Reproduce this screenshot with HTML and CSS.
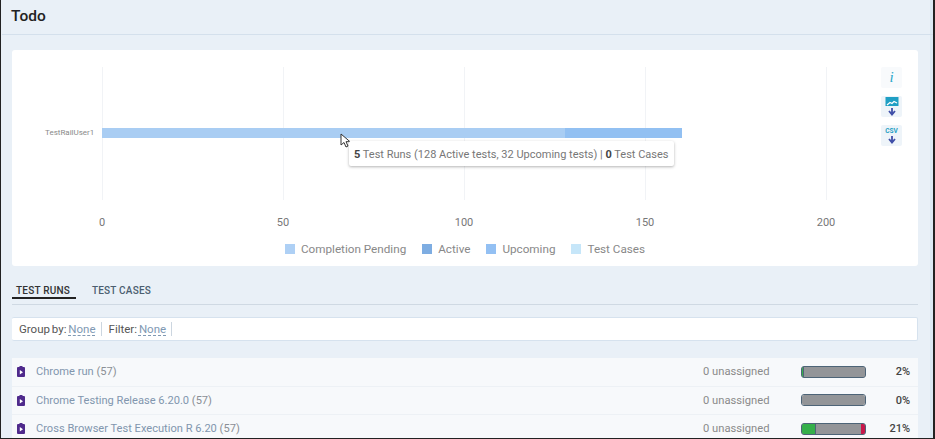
FILE: index.html
```html
<!DOCTYPE html>
<html lang="en">
<head>
  <meta charset="utf-8">
  <title>Todo</title>
  <link rel="stylesheet" href="styles.css">
</head>
<body>
  <div class="page">
    <header class="page-header"><h1>Todo</h1></header>

    <section class="chart-card">
      <div class="chart">
        <div class="chart-row">
          <div class="chart-user">TestRailUser1</div>
          <div class="plot">
            <div class="grid-cell"></div>
            <div class="grid-cell"></div>
            <div class="grid-cell"></div>
            <div class="grid-cell"></div>
            <div class="bar">
              <div class="bar-seg bar-pending" style="width: 463px"></div>
              <div class="bar-seg bar-upcoming" style="width: 117px"></div>
            </div>
            <svg class="cursor" width="11" height="15" viewBox="0 0 11 15">
              <path d="M1 1v11l3-2.500 2 4.500 2-1-2-4.300h4z" fill="#fff" stroke="#333" stroke-width="1"/>
            </svg>
            <div class="chart-tip"><b>5</b> Test Runs (128 Active tests, 32 Upcoming tests) | <b>0</b> Test Cases</div>
          </div>
        </div>
        <div class="axis">
          <span>0</span><span>50</span><span>100</span><span>150</span><span>200</span>
        </div>
        <div class="legend">
          <span class="legend-item"><i class="swatch swatch-pending"></i>Completion Pending</span>
          <span class="legend-item"><i class="swatch swatch-active"></i>Active</span>
          <span class="legend-item"><i class="swatch swatch-upcoming"></i>Upcoming</span>
          <span class="legend-item"><i class="swatch swatch-cases"></i>Test Cases</span>
        </div>
      </div>
      <div class="chart-tools">
        <div class="tool tool-info">i</div>
        <div class="tool">
          <svg width="16" height="19" viewBox="0 0 16 19">
            <rect x="1.500" y="0" width="13" height="9" fill="#1f9fc4"/>
            <path d="M3 8l3-2.500 2 1 2-2 3 1.500" fill="none" stroke="#fff" stroke-width="1.200"/>
            <path d="M8 11v5.500M5 14l3 3.500 3-3.500" fill="none" stroke="#3f4fa8" stroke-width="1.800"/>
          </svg>
        </div>
        <div class="tool">
          <div class="tool-csv">CSV</div>
          <svg width="16" height="9" viewBox="0 0 16 9">
            <path d="M8 1v5.500M5 4l3 3.500L11 4" fill="none" stroke="#3f4fa8" stroke-width="1.800"/>
          </svg>
        </div>
      </div>
    </section>

    <nav class="tabs">
      <a class="tab tab-active">TEST RUNS</a>
      <a class="tab">TEST CASES</a>
    </nav>

    <div class="filter-bar">
      <span class="filter-item">Group by: <u>None</u></span>
      <span class="filter-item">Filter: <u>None</u></span>
    </div>

    <div class="run-list">
      <div class="run-row">
        <svg class="run-icon" width="8" height="11" viewBox="0 0 8 11"><path d="M2.500 0h3v1H7a1 1 0 0 1 1 1v8a1 1 0 0 1-1 1H1a1 1 0 0 1-1-1V2a1 1 0 0 1 1-1h1.500z" fill="#4f2a8c"/><path d="M2.800 4v4.500L6 6.200z" fill="#fff"/></svg>
        <div class="run-name"><a>Chrome run</a> (57)</div>
        <div class="run-assigned">0 unassigned</div>
        <div class="progress">
          <div class="progress-pass" style="width: 3%"></div>
          <div class="progress-rest"></div>
        </div>
        <div class="run-pct">2%</div>
      </div>
      <div class="run-row">
        <svg class="run-icon" width="8" height="11" viewBox="0 0 8 11"><path d="M2.500 0h3v1H7a1 1 0 0 1 1 1v8a1 1 0 0 1-1 1H1a1 1 0 0 1-1-1V2a1 1 0 0 1 1-1h1.500z" fill="#4f2a8c"/><path d="M2.800 4v4.500L6 6.200z" fill="#fff"/></svg>
        <div class="run-name"><a>Chrome Testing Release 6.20.0</a> (57)</div>
        <div class="run-assigned">0 unassigned</div>
        <div class="progress">
          <div class="progress-rest"></div>
        </div>
        <div class="run-pct">0%</div>
      </div>
      <div class="run-row">
        <svg class="run-icon" width="8" height="11" viewBox="0 0 8 11"><path d="M2.500 0h3v1H7a1 1 0 0 1 1 1v8a1 1 0 0 1-1 1H1a1 1 0 0 1-1-1V2a1 1 0 0 1 1-1h1.500z" fill="#4f2a8c"/><path d="M2.800 4v4.500L6 6.200z" fill="#fff"/></svg>
        <div class="run-name"><a>Cross Browser Test Execution R 6.20</a> (57)</div>
        <div class="run-assigned">0 unassigned</div>
        <div class="progress">
          <div class="progress-pass" style="width: 23%"></div>
          <div class="progress-rest"></div>
          <div class="progress-fail" style="width: 7%"></div>
        </div>
        <div class="run-pct">21%</div>
      </div>
    </div>
  </div>
</body>
</html>
```

FILE: styles.css
```css
html, body {
  margin: 0;
  height: 439px;
  overflow: hidden;
}

body {
  font-family: Roboto, 'Liberation Sans', sans-serif;
  background: #fff;
  color: #555;
}

.page {
  box-sizing: border-box;
  width: 935px;
  height: 439px;
  padding-left: 1px;
  background: #e9f0f7;
  border-left: 1px solid #222;
  border-right: 2px solid #222;
  border-bottom: 1px solid #222;
  box-shadow: inset -3px 0 0 #dbe9f3;
  overflow: hidden;
}

.page-header {
  height: 34px;
  border-bottom: 1px solid #d4e0ec;
  box-sizing: content-box;
  padding-left: 9px;
}

h1 {
  margin: 0;
  padding-top: 7px;
  font-size: 15.500px;
  font-weight: 500;
  line-height: 19px;
  color: #222;
}

.chart-card {
  display: flex;
  width: 906px;
  height: 216px;
  margin: 15px 0 0 10px;
  background: #fff;
  border-radius: 3px;
}

.chart {
  width: 869px;
  padding-top: 17px;
}

.chart-row {
  display: flex;
  height: 133px;
}

.chart-user {
  width: 90px;
  padding-top: 60px;
  font-size: 8px;
  line-height: 11px;
  text-align: left;
  padding-left: 33px;
  box-sizing: border-box;
  color: #8a8a8a;
}

.plot {
  position: relative;
  display: flex;
}

.grid-cell {
  width: 180px;
  border-left: 1px solid #f1f3f6;
}

.grid-cell:nth-child(4) {
  border-right: 1px solid #f1f3f6;
}

.bar {
  position: absolute;
  left: 0;
  top: 61px;
  display: flex;
  height: 10px;
}

.bar-pending {
  background: #a9cdf3;
}

.bar-upcoming {
  background: #92c0f2;
}

.cursor {
  position: absolute;
  left: 238px;
  top: 66px;
}

.chart-tip {
  position: absolute;
  left: 247px;
  top: 74px;
  padding: 0 5px;
  height: 25px;
  line-height: 27px;
  white-space: nowrap;
  font-size: 11px;
  color: #777;
  background: #fff;
  border-radius: 2px;
  box-shadow: 0 1px 3px rgba(0, 0, 0, 0.3);
}

.chart-tip b {
  color: #444;
}

.axis {
  display: flex;
  justify-content: space-between;
  width: 754px;
  margin: 16px 0 0 75px;
  font-size: 11px;
  line-height: 14px;
  color: #777;
}

.axis span {
  width: 30px;
  text-align: center;
}

.legend {
  display: flex;
  gap: 16px;
  margin: 12px 0 0 273px;
  font-size: 11.700px;
  line-height: 14px;
  color: #888;
}

.legend-item {
  display: flex;
  align-items: center;
  gap: 6px;
}

.swatch {
  width: 10px;
  height: 10px;
}

.swatch-pending { background: #aed0f5; }
.swatch-active { background: #7eade2; }
.swatch-upcoming { background: #93c0f3; }
.swatch-cases { background: #c6e6f9; }

.chart-tools {
  display: flex;
  flex-direction: column;
  gap: 8px;
  padding-top: 17px;
}

.tool {
  display: flex;
  flex-direction: column;
  align-items: center;
  justify-content: center;
  width: 21px;
  height: 21px;
  background: #eef4f9;
  border-radius: 2px;
}

.tool-info {
  font-family: 'Liberation Serif', serif;
  font-style: italic;
  font-size: 15px;
  color: #2aa7c9;
  background: #f8fafc;
}

.tool-csv {
  font-size: 6.500px;
  line-height: 8px;
  font-weight: 700;
  color: #1f9fc4;
}

.tabs {
  display: flex;
  gap: 12px;
  width: 906px;
  height: 38px;
  margin-left: 10px;
  border-bottom: 1px solid #cfd9e3;
}

.tab {
  height: 13px;
  margin-top: 18px;
  padding: 0 4px;
  font-size: 10px;
  font-weight: 500;
  line-height: 13px;
  letter-spacing: 0.2px;
  color: #4b5e70;
}

.tab-active {
  padding-right: 6px;
  color: #333;
  border-bottom: 2px solid #222;
}

.filter-bar {
  display: flex;
  align-items: center;
  gap: 7px;
  box-sizing: border-box;
  width: 906px;
  height: 24px;
  margin: 12px 0 0 10px;
  padding-left: 7px;
  background: #fff;
  border: 1px solid #d6e2ee;
  border-left: 0;
  border-radius: 2px;
  font-size: 11.500px;
  word-spacing: -1px;
  color: #555;
}

.filter-item {
  padding-right: 5px;
  border-right: 1px solid #ccd6e0;
  line-height: 14px;
}

.filter-item u {
  color: #8099b3;
  text-decoration: underline dashed 1px;
  text-underline-offset: 2px;
}

.run-list {
  width: 906px;
  margin: 17px 0 0 10px;
}

.run-row {
  display: flex;
  align-items: center;
  box-sizing: border-box;
  height: 28.500px;
  background: #f7f9fb;
  border-bottom: 1px solid #edf1f5;
}

.run-icon {
  margin-left: 5px;
}

.run-name {
  flex: 1;
  margin-left: 11px;
  font-size: 11.100px;
  color: #8a8f95;
}

.run-name a {
  color: #8196ae;
}

.run-assigned {
  width: 98px;
  font-size: 11.200px;
  color: #8a8a8a;
}

.progress {
  display: flex;
  box-sizing: border-box;
  width: 65px;
  height: 12px;
  background: #939598;
  border: 1px solid #4d6477;
  border-radius: 3px;
  overflow: hidden;
}

.progress-rest {
  flex: 1;
  background: #939598;
}

.progress-pass {
  box-sizing: border-box;
  background: #35b04a;
  border-right: 1px solid #4d6477;
}

.progress-fail {
  background: #c8174a;
}

.run-pct {
  width: 44px;
  margin-right: 8px;
  text-align: right;
  font-size: 11px;
  font-weight: 500;
  color: #444;
}
```
